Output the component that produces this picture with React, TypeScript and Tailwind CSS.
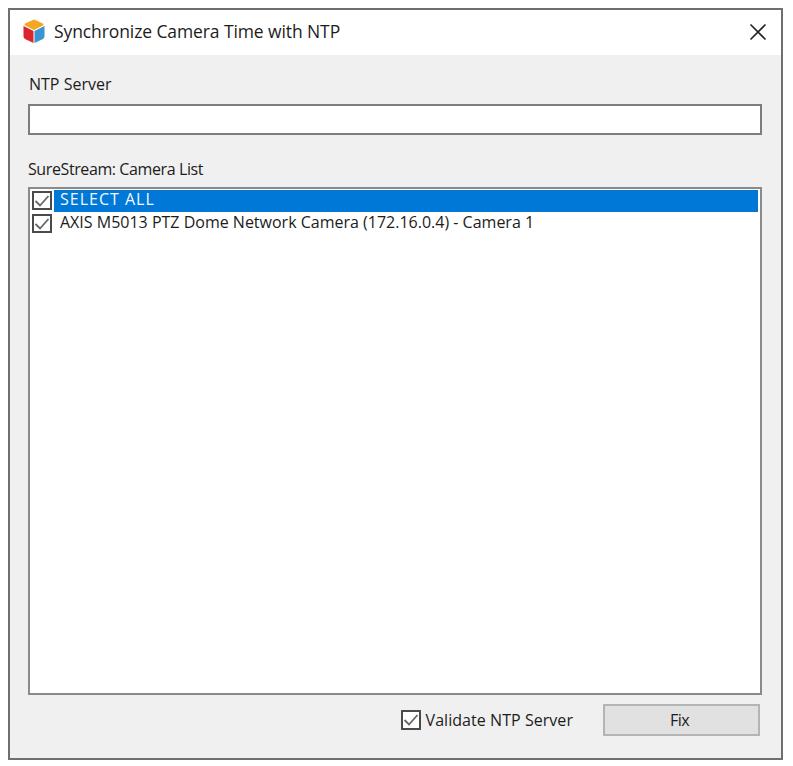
const FONT = "font-['Open_Sans','Noto_Sans',sans-serif]";

function CheckBox({ small }: { small?: boolean }) {
  return (
    <span
      className={`flex w-[20px] shrink-0 items-center justify-center border-2 border-[#4a4a4a] bg-white ${
        small ? "mt-[1px] h-[19px]" : "h-[20px]"
      }`}
    >
      <svg width="16" height="16" viewBox="0 0 16 16" fill="none">
        <path d="M1.5 8 L6 12.5 L14.5 3" stroke="#666666" strokeWidth="1.8" />
      </svg>
    </span>
  );
}

function ListRow({ label, selected }: { label: string; selected?: boolean }) {
  return (
    <div className="flex h-[23px] items-start">
      <CheckBox small />
      <span
        className={`ml-[2px] flex h-[22px] flex-1 items-center pb-[5px] pl-[6px] ${
          selected ? "bg-[#0078d7] text-[#f4f8fc] tracking-[1px]" : "text-[#1c1c1c]"
        }`}
      >
        {label}
      </span>
    </div>
  );
}

function CubeIcon() {
  return (
    <svg width="24" height="25" viewBox="0 0 24 25">
      <path d="M12 0.5 L21 4.5 Q22 5.5 21 6.5 L12 11 L3 6.5 Q2 5.5 3 4.5 Z" fill="#f5a623" />
      <path d="M1.5 7 L11.5 12 V24 L3 20 Q1.5 19 1.5 17 Z" fill="#d8262c" />
      <path d="M22.5 7 L12.5 12 V24 L21 20 Q22.5 19 22.5 17 Z" fill="#3a94d0" />
    </svg>
  );
}

export default function App() {
  return (
    <div className={`h-[766px] w-[793px] bg-white pl-[8px] pt-[8px] ${FONT} text-[16px] text-[#1c1c1c]`}>
      <div className="flex h-[752px] w-[775px] flex-col border-2 border-[#6f6f6f] bg-[#f0f0f0]">
        <div className="flex h-[45px] shrink-0 items-center bg-white pb-[2px] pl-[12px] pr-[14px]">
          <CubeIcon />
          <span className="ml-[8px] text-[17.5px] tracking-[-0.1px]">Synchronize Camera Time with NTP</span>
          <svg className="ml-auto" width="18" height="18" viewBox="0 0 18 18">
            <path d="M1.5 1.5 L16.5 16.5 M16.5 1.5 L1.5 16.5" stroke="#222222" strokeWidth="1.6" />
          </svg>
        </div>
        <div className="flex flex-1 flex-col pl-[18px] pr-[19px]">
          <div className="mt-[17px] pl-[1px] leading-[24px]">NTP Server</div>
          <div className="mt-[8px] h-[31px] border-2 border-[#7d7d7d] bg-white" />
          <div className="mt-[22px] leading-[24px] tracking-[-0.4px]">SureStream: Camera List</div>
          <div className="mt-[6px] h-[508px] border-2 border-[#8a8a8a] bg-white pl-[2px] pr-[2px] pt-[1px]">
            <ListRow label="SELECT ALL" selected />
            <ListRow label="AXIS M5013 PTZ Dome Network Camera (172.16.0.4) - Camera 1" />
          </div>
          <div className="mt-[9px] flex items-center justify-end pr-[2px]">
            <CheckBox />
            <span className="ml-[5px] tracking-[0.05px]">Validate NTP Server</span>
            <button className="ml-[30px] h-[32px] w-[157px] border-2 border-[#b4b4b4] bg-[#e1e1e1] pr-[4px] text-[16px] tracking-[-0.5px]">
              Fix
            </button>
          </div>
        </div>
      </div>
    </div>
  );
}
